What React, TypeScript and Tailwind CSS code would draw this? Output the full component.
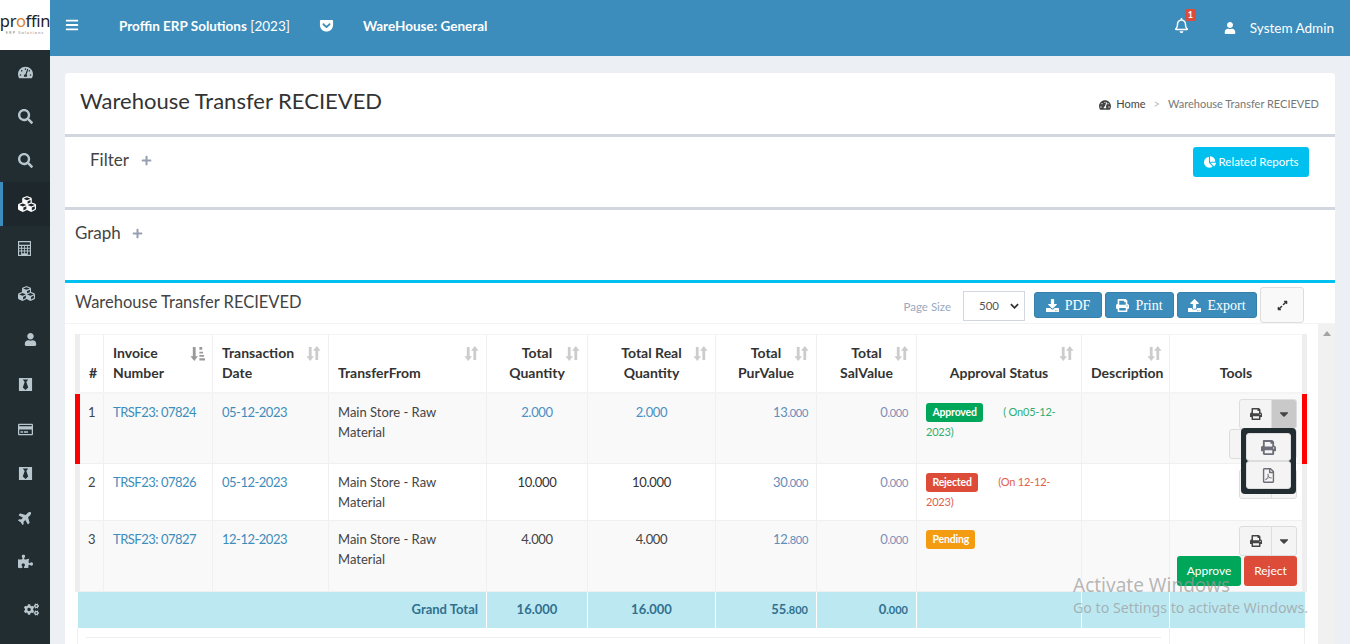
import React from "react";
import { FaBars, FaGetPocket, FaRegBell, FaUser, FaTachometerAlt, FaSearch, FaCubes, FaBlackTie, FaRegCreditCard, FaPlane, FaPuzzlePiece, FaCogs, FaPlus, FaChartPie, FaDownload, FaPrint, FaUpload, FaExpandAlt, FaCaretDown, FaRegFilePdf } from "react-icons/fa";

const Calc = ({ className }: { className?: string }) => (
  <svg viewBox="0 0 14 16" className={className}>
    <path fillRule="evenodd" fill="currentColor" d="M0 0h14v16H0zM1.200 1.200v2.800h11.600V1.200zM1.200 5.200v2h2.200v-2zM4.400 5.200v2h2.200v-2zM7.500 5.200v2h2.200v-2zM10.600 5.200v2h2.200v-2zM1.200 8.200v2h2.200v-2zM4.400 8.200v2h2.200v-2zM7.500 8.200v2h2.200v-2zM10.600 8.200v2h2.200v-2zM1.200 11.200v3.600h2.200v-3.600zM4.400 11.200v2h2.200v-2zM7.500 11.200v2h2.200v-2zM10.600 11.200v3.600h2.200v-3.600z" />
  </svg>
);

const Sort = ({ active }: { active?: boolean }) => (
  <svg viewBox="0 0 16 16" className="absolute right-[7px] top-[11px] h-[15px] w-[15px]" fill={active ? "#999" : "#ccc"}>
    <path d="M3 1h3v10h2.500L4.500 16 .5 11H3z" />
    {active ? (
      <path d="M10 1h3v3h-3zM10 6h4v2h-4zM10 9.500h5v2h-5zM10 13h6v2.500h-6z" />
    ) : (
      <path d="M10 15h3V5h2.500l-4-5-4 5H10z" />
    )}
  </svg>
);

const side = [
  { I: FaTachometerAlt, h: "h-[44px]", ml: "text-[15px]" },
  { I: FaSearch, h: "h-[44px]", ml: "text-[15px]" },
  { I: FaSearch, h: "h-[44px]", ml: "text-[15px]" },
  { I: FaCubes, h: "h-[44px]", active: true, ml: "text-[18px]" },
  { I: Calc, h: "h-[44px]", ml: "h-[15px] w-[13px]" },
  { I: FaCubes, h: "h-[46px]", ml: "text-[17px]" },
  { I: FaUser, h: "h-[46px]", ml: "ml-[6px] text-[13px]" },
  { I: FaBlackTie, h: "h-[45px]", ml: "text-[15px]" },
  { I: FaRegCreditCard, h: "h-[44px]", ml: "text-[15px]" },
  { I: FaBlackTie, h: "h-[44px]", ml: "text-[15px]" },
  { I: FaPlane, h: "h-[44px]", ml: "-rotate-45 text-[15px]" },
  { I: FaPuzzlePiece, h: "h-[44px]", ml: "text-[15px]" },
  { I: FaCogs, h: "h-[52px]", ml: "ml-[6px] text-[15px]" },
];

const Small = ({ a, b }: { a: string; b: string }) => (
  <>
    {a}
    <span className="text-[11px]">{b}</span>
  </>
);

const PrintGroup = ({ open }: { open?: boolean }) => (
  <div className="flex justify-end">
    <div className="flex h-[30px] w-[58px] overflow-hidden rounded-[3px] border border-[#ddd] bg-[#f4f4f4]">
      <div className="flex w-[32px] items-center justify-center border-r border-[#ddd] text-[#444]">
        <FaPrint className="text-[12px]" />
      </div>
      <div className={`flex flex-1 items-center justify-center text-[#444] ${open ? "bg-[#c9c9c9]" : ""}`}>
        <FaCaretDown className="text-[14px]" />
      </div>
    </div>
  </div>
);

const td = "border-r border-[#f0f0f0] align-top px-[9px] pt-[8px] leading-[20px]";
const num = "tracking-[-0.3px]";
const th = "relative border-r border-[#f0f0f0] align-bottom px-[9px] pb-[9px] text-center leading-[20px] font-bold text-[#333]";
const link = "text-[#3c8dbc] whitespace-nowrap tracking-[-0.5px]";
const badge = "inline-block h-[19px] rounded-[3px] px-[6.500px] text-[10.500px] font-bold leading-[18px] text-white";

const rows = [
  { n: "1", inv: "TRSF23: 07824", date: "05-12-2023", qty: "2.000", real: "2.000", qtyC: "text-[#4a90c4]", pur: ["13", ".000"], h: "h-[71px]", bg: "bg-[#f9f9f9]", red: true },
  { n: "2", inv: "TRSF23: 07826", date: "05-12-2023", qty: "10.000", real: "10.000", qtyC: "text-[#333]", pur: ["30", ".000"], h: "h-[57px]", bg: "bg-white" },
  { n: "3", inv: "TRSF23: 07827", date: "12-12-2023", qty: "4.000", real: "4.000", qtyC: "text-[#444]", pur: ["12", ".800"], h: "h-[71px]", bg: "bg-[#f9f9f9]" },
];

export default function App() {
  return (
    <div className="relative flex h-screen w-full overflow-hidden bg-[#ecf0f5] text-[14px] text-[#333] font-['Lato','Noto_Sans',sans-serif]">
      <aside className="flex w-[50px] shrink-0 flex-col bg-[#222d32]">
        <div className="flex h-[50px] flex-col items-center justify-center overflow-hidden bg-white pb-[5px]">
          <div className="text-[16.500px] leading-[20px] text-[#222] font-['Noto_Sans',sans-serif] tracking-[-0.3px] whitespace-nowrap">
            pr<span className="text-[#d9822b]">o</span>ffin
          </div>
          <div className="text-[4px] leading-[4px] tracking-[1.100px] text-[#888] whitespace-nowrap">ERP Solutions</div>
        </div>
        {side.map(({ I, h, active, ml }, i) => (
          <div key={i} className={`flex shrink-0 items-center ${h} ${active ? "border-l-[3px] border-[#3c8dbc] bg-[#1e282c] pl-[15px] text-white" : "pl-[18px] text-[#b8c7ce]"}`}>
            <I className={ml} />
          </div>
        ))}
      </aside>

      <div className="flex min-w-0 flex-1 flex-col">
        <header className="flex h-[56px] shrink-0 items-center bg-[#3c8dbc] text-[13.500px] text-white">
          <FaBars className="ml-[15px] mt-[-6px] text-[14px]" />
          <div className="ml-[40px] mt-[-4px] whitespace-nowrap"><b>Proffin ERP Solutions</b> [2023]</div>
          <FaGetPocket className="ml-[29px] mt-[-6px] text-[15px]" />
          <div className="ml-[29px] mt-[-4px] font-bold whitespace-nowrap">WareHouse: General</div>
          <div className="relative ml-auto mt-[-6px]">
            <FaRegBell className="text-[15px]" />
            <span className="absolute -right-[7px] -top-[9px] flex h-[12px] w-[11px] items-center justify-center rounded-[2px] bg-[#dd4b39] text-[9px] font-bold">1</span>
          </div>
          <FaUser className="ml-[35px] mt-[-1px] text-[12px]" />
          <div className="ml-[14px] mr-[16px] whitespace-nowrap">System Admin</div>
        </header>

        <main className="mx-[15px] mt-[17px] flex min-h-0 flex-1 flex-col overflow-hidden rounded-t-[4px] bg-white">
          <div className="flex h-[61px] shrink-0 items-center justify-between pl-[15px] pr-[16px]">
            <h1 className="mt-[-6px] text-[22px] text-[#333] whitespace-nowrap">Warehouse Transfer RECIEVED</h1>
            <div className="mt-[2px] flex items-center text-[11px] text-[#777]">
              <FaTachometerAlt className="mr-[5px] text-[12px] text-[#444]" />
              <span className="text-[#444]">Home</span>
              <span className="mx-[8px] text-[#bbb]">&gt;</span>
              <span>Warehouse Transfer RECIEVED</span>
            </div>
          </div>

          <section className="flex h-[73px] shrink-0 justify-between border-t-[3px] border-[#d2d6de] pl-[25px] pr-[26px]">
            <div className="mt-[11px] flex h-[24px] items-center text-[#444]">
              <span className="text-[17px]">Filter</span>
              <FaPlus className="ml-[12px] mt-[1px] text-[11px] text-[#97a0b3]" />
            </div>
            <button className="mt-[10px] flex h-[30px] w-[116px] items-center justify-center rounded-[3px] bg-[#00c0ef] text-[11.500px] text-white">
              <FaChartPie className="mr-[3px] text-[12px]" /> Related Reports
            </button>
          </section>

          <section className="h-[73px] shrink-0 border-t-[3px] border-[#d2d6de] pl-[10px]">
            <div className="mt-[11px] flex h-[24px] items-center text-[#444]">
              <span className="text-[17px]">Graph</span>
              <FaPlus className="ml-[11px] mt-[1px] text-[11px] text-[#97a0b3]" />
            </div>
          </section>

          <section className="flex min-h-0 flex-1 flex-col border-t-[3px] border-[#00c0ef]">
            <div className="flex h-[41px] shrink-0 items-center border-b border-[#f4f4f4] pl-[10px] pr-[31px]">
              <h3 className="mt-[-2px] text-[16.500px] text-[#444] whitespace-nowrap">Warehouse Transfer RECIEVED</h3>
              <span className="ml-auto mr-[12px] mt-[8px] text-[11.500px] text-[#9aa9c0]">Page Size</span>
              <div className="mt-[6px] flex h-[30px] w-[62px] items-center justify-between border border-[#d2d6de] pl-[15px] pr-[5px] text-[11.500px] text-[#555]">
                500
                <svg viewBox="0 0 10 6" className="h-[6px] w-[9px]"><path d="M1 1l4 4 4-4" fill="none" stroke="#333" strokeWidth="2" /></svg>
              </div>
              <div className="ml-[9px] mt-[4px] flex gap-[3px] font-['Liberation_Serif',serif] text-[14px] text-white">
                <button className="flex h-[26px] w-[68px] items-center justify-center gap-[6px] rounded-[3px] border border-[#367fa9] bg-[#3c8dbc]"><FaDownload className="text-[13px]" />PDF</button>
                <button className="flex h-[26px] w-[69px] items-center justify-center gap-[6px] rounded-[3px] border border-[#367fa9] bg-[#3c8dbc]"><FaPrint className="text-[13px]" />Print</button>
                <button className="flex h-[26px] w-[80px] items-center justify-center gap-[6px] rounded-[3px] border border-[#367fa9] bg-[#3c8dbc]"><FaUpload className="text-[13px]" />Export</button>
              </div>
              <button className="ml-[3px] mt-[4px] flex h-[36px] w-[44px] items-center justify-center rounded-[3px] border border-[#ddd] bg-[#f9f9f9] text-[#333]">
                <FaExpandAlt className="text-[11px]" />
              </button>
            </div>

            <div className="relative min-h-0 flex-1 pl-[10px] pt-[10px]">
              <div className="absolute right-0 top-0 h-full w-[17px] bg-[#f1f1f1]">
                <svg viewBox="0 0 10 6" className="mx-auto mt-[7px] h-[5px] w-[8px]"><path d="M5 0l5 6H0z" fill="#a3a3a3" /></svg>
              </div>
              <table className="w-[1232px] table-fixed border-collapse text-[13px] text-[#444]">
                <colgroup>
                  <col className="w-[26px]" />
                  <col className="w-[109px]" />
                  <col className="w-[116px]" />
                  <col className="w-[158px]" />
                  <col className="w-[101px]" />
                  <col className="w-[128px]" />
                  <col className="w-[101px]" />
                  <col className="w-[100px]" />
                  <col className="w-[165px]" />
                  <col className="w-[88px]" />
                  <col className="w-[135px]" />
                </colgroup>
                <thead className="text-[14px]">
                  <tr className="h-[58px] border-x-[5px] border-b-2 border-t border-x-[#eee] border-b-[#f4f4f4] border-t-[#f4f4f4]">
                    <th className={`${th} px-0`}>#</th>
                    <th className={th}><div className="text-left">Invoice<br />Number</div><Sort active /></th>
                    <th className={th}><div className="text-left">Transaction<br />Date</div><Sort /></th>
                    <th className={th}><div className="text-left">TransferFrom</div><Sort /></th>
                    <th className={th}>Total<br />Quantity<Sort /></th>
                    <th className={th}>Total Real<br />Quantity<Sort /></th>
                    <th className={th}>Total<br />PurValue<Sort /></th>
                    <th className={th}>Total<br />SalValue<Sort /></th>
                    <th className={th}>Approval Status<Sort /></th>
                    <th className={`${th} px-0`}>Description<Sort /></th>
                    <th className={`${th} border-r-0`}>Tools</th>
                  </tr>
                </thead>
                <tbody>
                  {rows.map((r) => (
                    <tr key={r.n} className={`${r.h} ${r.bg} border-x-[5px] border-b border-b-[#f0f0f0] ${r.red ? "border-x-[#ff0000]" : "border-x-[#eee]"}`}>
                      <td className={`${td} pl-[8px]`}>{r.n}</td>
                      <td className={td}><span className={link}>{r.inv}</span></td>
                      <td className={td}><span className={link}>{r.date}</span></td>
                      <td className={td}>Main Store - Raw Material</td>
                      <td className={`${td} text-center ${num} ${r.qtyC}`}>{r.qty}</td>
                      <td className={`${td} text-center ${num} ${r.qtyC}`}>{r.real}</td>
                      <td className={`${td} pr-[8px] text-right ${num} text-[#5f8dbd]`}><Small a={r.pur[0]} b={r.pur[1]} /></td>
                      <td className={`${td} pr-[8px] text-right ${num} text-[#7f8fb8]`}><Small a="0" b=".000" /></td>
                      <td className={`${td} text-[11px] tracking-[-0.2px]`}>
                        {r.n === "1" && (
                          <div>
                            <span className={`${badge} bg-[#00a65a]`}>Approved</span>
                            <span className="ml-[20px] text-[#2fae72]">( On05-12-<br />2023)</span>
                          </div>
                        )}
                        {r.n === "2" && (
                          <div>
                            <span className={`${badge} bg-[#dd4b39]`}>Rejected</span>
                            <span className="ml-[20px] text-[#e2604f]">(On 12-12-<br />2023)</span>
                          </div>
                        )}
                        {r.n === "3" && <span className={`${badge} bg-[#f39c12]`}>Pending</span>}
                      </td>
                      <td className={td}></td>
                      <td className="px-[5px] pt-[5px] align-top">
                        <PrintGroup open={r.n === "1"} />
                        {r.n === "1" && (
                          <div className="flex justify-end">
                            <div className="h-[30px] w-[68px] rounded-[3px] border border-[#ddd] bg-[#f4f4f4]" />
                          </div>
                        )}
                        {r.n === "3" && (
                          <div className="flex justify-end gap-[3px] text-[12px] text-white">
                            <button className="h-[30px] w-[64px] rounded-[3px] bg-[#00a65a]">Approve</button>
                            <button className="h-[30px] w-[53px] rounded-[3px] bg-[#dd4b39]">Reject</button>
                          </div>
                        )}
                      </td>
                    </tr>
                  ))}
                  <tr className="h-[36px] bg-[#bce8f1] font-bold text-[#31708f]">
                    <td colSpan={4} className="border-r border-white pr-[8px] text-right">Grand Total</td>
                    <td className="border-r border-white text-center">16.000</td>
                    <td className="border-r border-white text-center">16.000</td>
                    <td className="border-r border-white pr-[8px] text-right"><Small a="55" b=".800" /></td>
                    <td className="border-r border-white pr-[8px] text-right"><Small a="0" b=".000" /></td>
                    <td className="border-r border-white"></td>
                    <td className="border-r border-white"></td>
                    <td></td>
                  </tr>
                  <tr className="h-[20px]">
                    <td colSpan={10} className="border-x border-[#f0f0f0] px-[8px] pt-[9px] align-top">
                      <div className="h-px w-full bg-[#eee]" />
                    </td>
                    <td className="border-r border-[#f0f0f0]"></td>
                  </tr>
                </tbody>
              </table>
            </div>
          </section>
        </main>
      </div>

      <div className="absolute left-[1241px] top-[428px] flex h-[66px] w-[55px] flex-col rounded-[4px] bg-[#222d32] p-[5px] text-[#6e6e7a]">
        <div className="flex h-[28px] items-center justify-center rounded-[3px] border border-[#ddd] bg-[#f4f4f4]"><FaPrint className="text-[15px]" /></div>
        <div className="flex h-[28px] items-center justify-center rounded-[3px] border border-[#ddd] bg-[#f4f4f4]"><FaRegFilePdf className="text-[15px]" /></div>
      </div>

      <div className="pointer-events-none absolute left-[1073px] top-[573px] font-['Noto_Sans',sans-serif] text-[#9a9a9a]/70">
        <div className="text-[19px] leading-[24px] whitespace-nowrap">Activate Windows</div>
        <div className="mt-[1px] text-[14.200px] leading-[20px] whitespace-nowrap">Go to Settings to activate Windows.</div>
      </div>
    </div>
  );
}
